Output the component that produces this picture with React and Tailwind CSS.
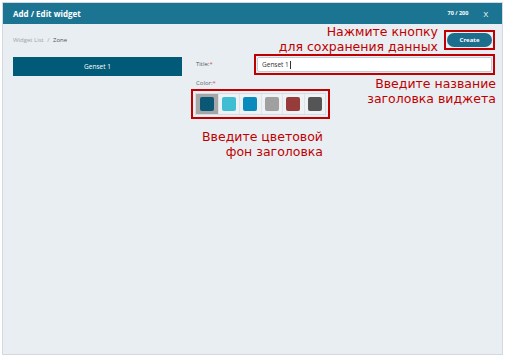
import React from "react";

const swatches = ["#0a5876", "#3fbdd3", "#0b8bbd", "#a0a0a0", "#973b3b", "#555555"];

const Note = ({ className, children }) => (
  <div
    className={`absolute text-right text-[12.5px] leading-[15px] text-[#c00000] ${className}`}
    style={{ fontFamily: '"DejaVu Sans", sans-serif' }}
  >
    {children}
  </div>
);

const App = () => {
  return (
    <div
      className="relative w-[506px] h-[357px] bg-white p-[2px]"
      style={{ fontFamily: '"Open Sans", sans-serif' }}
    >
      <div className="flex flex-col h-[353px] w-[501px] border border-[#d3d9de] bg-[#e9eef2]">
        <div className="flex items-center justify-between h-[21px] bg-[#1b7592] pl-[10px] pr-[14px] text-white">
          <span className="text-[8px] font-bold">Add / Edit widget</span>
          <div className="flex items-center gap-[15px]">
            <span className="text-[5.5px] font-bold">70 / 200</span>
            <span className="text-[8px]">X</span>
          </div>
        </div>

        <div className="flex flex-col px-[10px] pt-[9px]">
          <div className="flex items-center justify-between h-[14px]">
            <div className="text-[6px] text-[#9aa4ab]">
              Widget List <span className="mx-[2px]">/</span> <span className="text-[#555]">Zone</span>
            </div>
            <div className="outline-2 outline-[#c00000] outline-offset-[1px]">
              <button className="h-[14px] w-[45px] rounded-full bg-[#1c6e8c] text-[6px] font-bold text-white flex items-center justify-center">
                Create
              </button>
            </div>
          </div>

          <div className="flex mt-[10px] gap-[14px]">
            <div className="w-[169px] h-[19px] bg-[#005a78] text-white text-[6.5px] flex items-center justify-center">
              Genset 1
            </div>

            <div className="flex flex-col flex-1">
              <div className="flex items-center h-[15px]">
                <span className="w-[61px] text-[6px] text-[#555]">
                  Title:<span className="text-[#d9534f]">*</span>
                </span>
                <div className="flex-1 outline-2 outline-[#c00000] outline-offset-[1px]">
                  <div className="h-[15px] bg-white border border-[#c4ccd3] rounded-[2px] flex items-center px-[4px] text-[6.5px] text-[#333]">
                    Genset 1<span className="ml-[1px] w-[1px] h-[8px] bg-[#333]"></span>
                  </div>
                </div>
              </div>

              <span className="mt-[7px] text-[6px] leading-[8px] text-[#666]">
                Color:<span className="text-[#d9534f]">*</span>
              </span>

              <div className="mt-[6px] -ml-[1px] self-start outline-2 outline-[#c00000] outline-offset-[2px]">
                <div className="flex border border-[#d6dce1] bg-[#eef2f5]">
                  {swatches.map((c, i) => (
                    <div
                      key={c}
                      className={`w-[21.5px] h-[20px] flex items-center justify-center ${
                        i === 0 ? "bg-[#a6a6a6]" : "border-l border-[#dde3e8]"
                      }`}
                    >
                      <div className="w-[14px] h-[14px] rounded-[2px]" style={{ backgroundColor: c }} />
                    </div>
                  ))}
                </div>
              </div>
            </div>
          </div>
        </div>
      </div>

      <Note className="right-[68px] top-[24px]">
        Нажмите кнопку
        <br />
        для сохранения данных
      </Note>
      <Note className="right-[10px] top-[76px]">
        Введите название
        <br />
        заголовка виджета
      </Note>
      <Note className="right-[183px] top-[129px]">
        Введите цветовой
        <br />
        фон заголовка
      </Note>
    </div>
  );
};

export default App;
